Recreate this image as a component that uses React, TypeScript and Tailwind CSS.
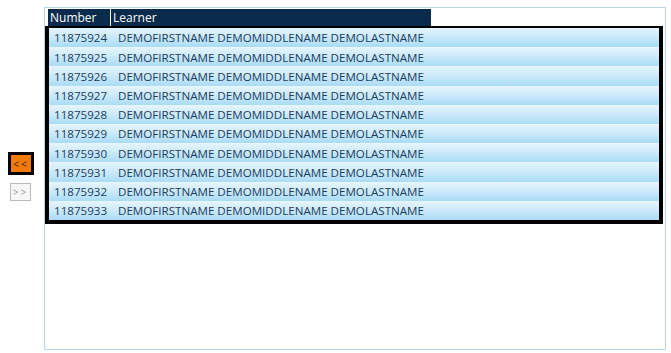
import React from 'react';

const learners = Array.from({ length: 10 }, (_, i) => ({
  number: String(11875924 + i),
  name: 'DEMOFIRSTNAME DEMOMIDDLENAME DEMOLASTNAME',
}));

const App: React.FC = () => {
  return (
    <div className="w-[671px] h-[353px] bg-white flex font-['Open_Sans',sans-serif] overflow-hidden">
      {/* Move buttons */}
      <div className="w-[44px] flex flex-col items-start pt-[152px] pl-[8px]">
        <button className="w-[26px] h-[23px] bg-[#f07a0a] border-[3px] border-black text-[#3a2a10] text-[10px] leading-none flex items-center justify-center tracking-[2px]">
          &lt;&lt;
        </button>
        <button className="mt-[8px] ml-[2px] w-[21px] h-[18px] bg-[#f7f7f7] border border-[#b8b8b8] text-[#9a9a9a] text-[10px] leading-none flex items-center justify-center tracking-[2px]">
          &gt;&gt;
        </button>
      </div>

      {/* Learner list panel */}
      <div className="mt-[7px] w-[622px] h-[343px] border border-[#b9d7e6] pt-[1px]">
        <div className="ml-[3px] w-[383px] h-[17px] bg-[#0b2b4c] flex text-white text-[12px] leading-[17px]">
          <div className="w-[63px] pl-[2px] border-r border-white">Number</div>
          <div className="pl-[2px]">Learner</div>
        </div>
        <div className="w-[618px] border-t-2 border-x-4 border-b-4 border-black">
          {learners.map((l, i) => (
            <div
              key={l.number}
              className={`h-[19.2px] flex items-center text-[11.6px] text-[#1d3c5e] bg-gradient-to-b from-[#e4f4fd] via-[#c9e9fa] to-[#a9dcf6] ${i > 0 ? 'border-t border-[#eaf6fd]' : ''}`}
            >
              <div className="w-[69px] pl-[5px]">{l.number}</div>
              <div>{l.name}</div>
            </div>
          ))}
        </div>
      </div>
    </div>
  );
};

export default App;
